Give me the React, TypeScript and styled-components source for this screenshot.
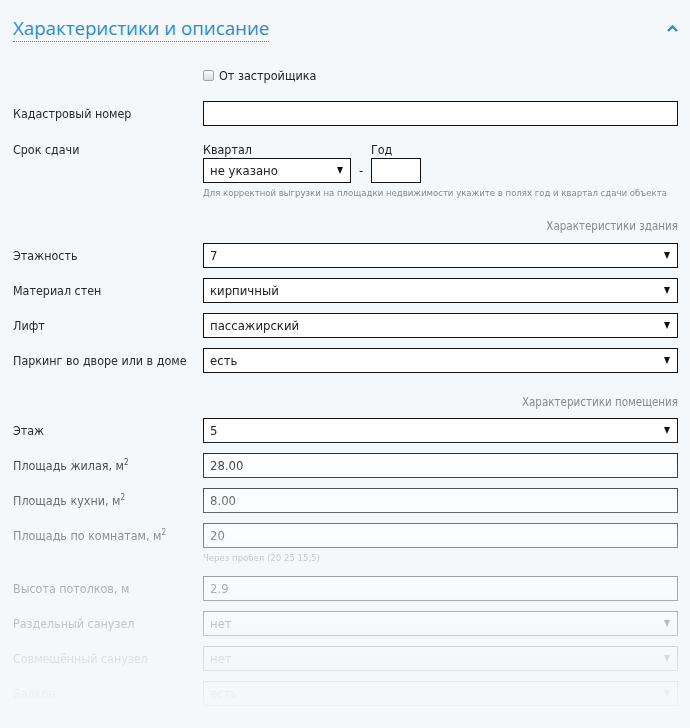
import styled, { createGlobalStyle } from "styled-components";

const GlobalStyle = createGlobalStyle`
  body {
    margin: 0;
    background: #f4f8fb;
    font-family: "DejaVu Sans Condensed", "DejaVu Sans", sans-serif;
    color: #222;
  }
`;

const Panel = styled.div`
  padding: 13px 12px 0 13px;
  height: 728px;
  overflow: hidden;
  box-sizing: border-box;
`;

const Header = styled.div`
  display: flex;
  align-items: center;
  justify-content: space-between;
  height: 30px;
`;

const Title = styled.h2`
  margin: 0;
  font-family: "Open Sans", sans-serif;
  font-weight: 400;
  font-size: 18.7px;
  color: #2b8ad6;
  border-bottom: 1px dotted #2b8ad6;
  line-height: 26px;
`;

const Collapse = styled.button`
  border: 0;
  background: none;
  padding: 0;
  width: 12px;
  height: 10px;
  display: flex;
  align-items: center;
  justify-content: center;
`;

// lower rows of the form fade out into the page background
const Body = styled.div`
  mask-image: linear-gradient(
    to bottom,
    #000 360px,
    rgba(0, 0, 0, 0.42) 490px,
    rgba(0, 0, 0, 0.3) 545px,
    rgba(0, 0, 0, 0.15) 580px,
    rgba(0, 0, 0, 0.06) 615px,
    transparent 655px
  );
`;

const Row = styled.div<{ $top?: number; $align?: string }>`
  display: grid;
  grid-template-columns: 190px 1fr;
  align-items: ${(p) => p.$align || "center"};
  margin-top: ${(p) => p.$top ?? 10}px;
`;

const Label = styled.div`
  font-size: 12.4px;
  line-height: 16px;
  color: #2a2a2a;
`;

const Box = styled.div<{ $width?: number }>`
  height: 25px;
  box-sizing: border-box;
  width: ${(p) => (p.$width ? `${p.$width}px` : "100%")};
  border: 1px solid #111;
  background: #fff;
  display: flex;
  align-items: center;
  justify-content: space-between;
  padding: 0 7px 0 6px;
  font-size: 13px;
`;

const Arrow = styled.span`
  width: 0;
  height: 0;
  border-left: 3.5px solid transparent;
  border-right: 3.5px solid transparent;
  border-top: 7px solid #111;
`;

const CheckLine = styled.label`
  grid-column: 2;
  display: flex;
  align-items: center;
  gap: 5px;
  font-size: 12.5px;
`;

const Check = styled.span`
  width: 11px;
  height: 11px;
  border: 1px solid #a4a4a4;
  border-radius: 2px;
  background: linear-gradient(#fcfcfc, #dcdcdc);
  box-sizing: border-box;
`;

const Term = styled.div`
  display: flex;
  align-items: flex-end;
`;

const TermPart = styled.div`
  display: flex;
  flex-direction: column;
  font-size: 12.4px;
  line-height: 16px;
`;

const Dash = styled.span`
  width: 20px;
  text-align: center;
  font-size: 13px;
  line-height: 25px;
`;

const Hint = styled.div`
  grid-column: 2;
  font-size: 9.5px;
  color: #888;
  margin-top: 4px;
  white-space: nowrap;
`;

const Section = styled.div<{ $top: number }>`
  text-align: right;
  font-size: 11.5px;
  color: #888;
  margin-top: ${(p) => p.$top}px;
  line-height: 16px;
`;

const Sup = styled.sup`
  font-size: 8px;
  line-height: 0;
`;

function Select({ value, width }: { value: string; width?: number }) {
  return (
    <Box $width={width}>
      <span>{value}</span>
      <Arrow />
    </Box>
  );
}

const building = [
  ["Этажность", "7"],
  ["Материал стен", "кирпичный"],
  ["Лифт", "пассажирский"],
  ["Паркинг во дворе или в доме", "есть"],
];

export default function App() {
  return (
    <Panel>
      <GlobalStyle />
      <Header>
        <Title>Характеристики и описание</Title>
        <Collapse>
          <svg width="11" height="7" viewBox="0 0 11 7">
            <polyline points="1,6 5.5,1.5 10,6" fill="none" stroke="#2b8ad6" strokeWidth="2.4" />
          </svg>
        </Collapse>
      </Header>
      <Body>
        <Row $top={25}>
          <CheckLine>
            <Check />
            От застройщика
          </CheckLine>
        </Row>
        <Row $top={18}>
          <Label>Кадастровый номер</Label>
          <Box />
        </Row>
        <Row $top={16} $align="start">
          <Label>Срок сдачи</Label>
          <Term>
            <TermPart>
              Квартал
              <Select value="не указано" width={148} />
            </TermPart>
            <Dash>-</Dash>
            <TermPart>
              Год
              <Box $width={50} />
            </TermPart>
          </Term>
          <Hint>
            Для корректной выгрузки на площадки недвижимости укажите в полях год и квартал сдачи объекта
          </Hint>
        </Row>
        <Section $top={20}>Характеристики здания</Section>
        {building.map(([label, value], i) => (
          <Row key={label} $top={i === 0 ? 9 : 10}>
            <Label>{label}</Label>
            <Select value={value} />
          </Row>
        ))}
        <Section $top={21}>Характеристики помещения</Section>
        <Row $top={8}>
          <Label>Этаж</Label>
          <Select value="5" />
        </Row>
        <Row>
          <Label>
            Площадь жилая, м<Sup>2</Sup>
          </Label>
          <Box>28.00</Box>
        </Row>
        <Row>
          <Label>
            Площадь кухни, м<Sup>2</Sup>
          </Label>
          <Box>8.00</Box>
        </Row>
        <Row>
          <Label>
            Площадь по комнатам, м<Sup>2</Sup>
          </Label>
          <Box>20</Box>
          <Hint>Через пробел (20 25 15,5)</Hint>
        </Row>
        <Row $top={13}>
          <Label>Высота потолков, м</Label>
          <Box>2.9</Box>
        </Row>
        <Row>
          <Label>Раздельный санузел</Label>
          <Select value="нет" />
        </Row>
        <Row>
          <Label>Совмещённый санузел</Label>
          <Select value="нет" />
        </Row>
        <Row>
          <Label>Балкон</Label>
          <Select value="есть" />
        </Row>
      </Body>
    </Panel>
  );
}
